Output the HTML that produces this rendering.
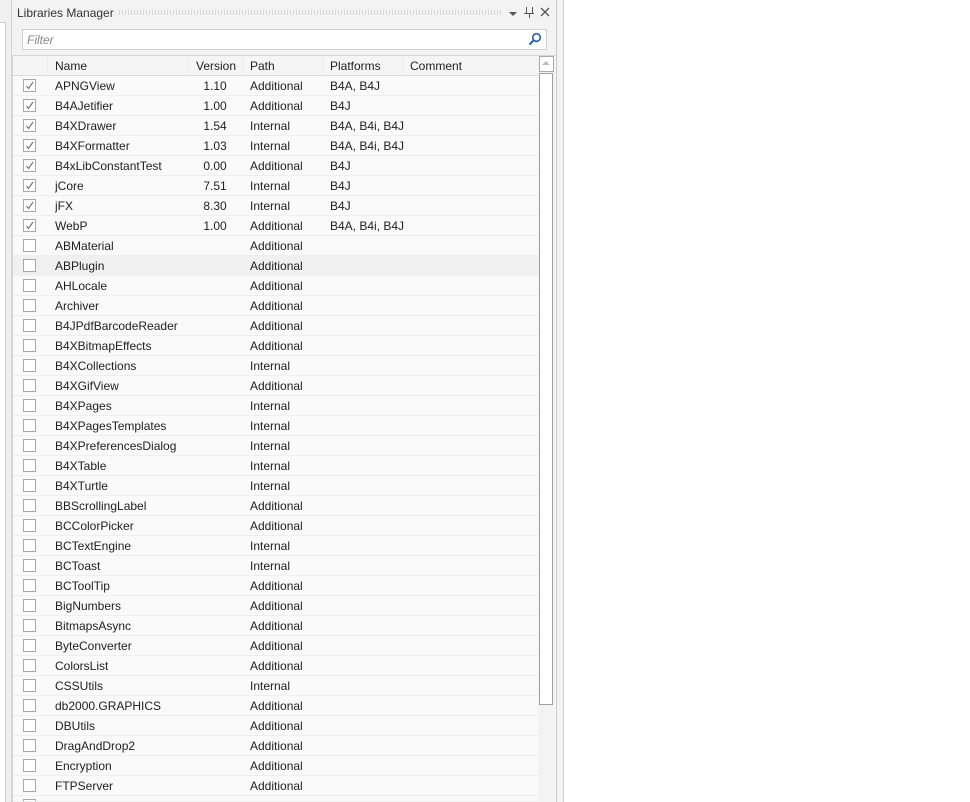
<!DOCTYPE html><html style="overflow:hidden;height:802px"><head><style>
body{margin:0;width:970px;height:802px;background:#fff;position:relative;overflow:hidden;font-family:"Liberation Sans",sans-serif;font-size:12px;color:#1e1e1e}
.a{position:absolute}
.row{position:absolute;left:13px;width:525px;height:20px;border-bottom:1px solid #efefef;box-sizing:border-box;background:#fafafa}
.row span{position:absolute;top:3px;white-space:nowrap;overflow:hidden}
.cb{position:absolute;left:10px;top:3px;width:11px;height:11px;border:1px solid #a8a8a8;background:#fff}
.cb svg{position:absolute;left:1px;top:1px}
.vl{position:absolute;top:56px;width:1px;height:746px;background:#ececec}
</style></head><body>
<div class="a" style="left:0;top:0;width:11px;height:802px;background:#f0f0f0"></div>
<div class="a" style="left:0;top:22px;width:5px;height:780px;border-right:1px solid #ccc;border-top:1px solid #ccc;background:#fff"></div>
<div class="a" style="left:11px;top:0;width:544px;height:802px;background:#f3f3f3;border-left:1px solid #d4d4d4;border-right:1px solid #c8c8c8"></div>
<div class="a" style="left:563px;top:0;width:1px;height:802px;background:#d0d0d0"></div>
<div class="a" style="left:557px;top:0;width:6px;height:802px;background:#f3f3f3"></div>
<div class="a" style="left:17px;top:6px;font-size:12px;color:#333">Libraries Manager</div>
<div class="a" style="left:118px;top:10px;width:384px;height:5px;background-image:radial-gradient(#bbb 0.6px,transparent 0.8px);background-size:3px 2px"></div>
<div class="a" style="left:509px;top:12px;width:0;height:0;border-left:4px solid transparent;border-right:4px solid transparent;border-top:4px solid #555"></div>
<div class="a" style="left:526px;top:7px;width:5px;height:6px;border:1px solid #555;border-top:none;background:#f3f3f3"></div>
<div class="a" style="left:524px;top:13px;width:10px;height:1px;background:#555"></div>
<div class="a" style="left:529px;top:13px;width:1px;height:5px;background:#555"></div>
<svg class="a" style="left:540px;top:7px" width="10" height="10"><path d="M1 1L9 9M9 1L1 9" stroke="#555" stroke-width="1.3"/></svg>
<div class="a" style="left:22px;top:29px;width:523px;height:19px;background:#fff;border:1px solid #cfcfcf"></div>
<div class="a" style="left:27px;top:33px;font-style:italic;color:#888">Filter</div>
<svg class="a" style="left:528px;top:32px" width="14" height="14"><circle cx="8.5" cy="5.5" r="3.8" fill="none" stroke="#1e5fb4" stroke-width="1.6"/><path d="M5.7 8.3L1.5 12.5" stroke="#1e5fb4" stroke-width="2"/></svg>
<div class="a" style="left:12px;top:55px;width:543px;height:747px;background:#fafafa;border-top:1px solid #d6d6d6;border-left:1px solid #d6d6d6"></div>
<div class="a" style="left:13px;top:56px;width:525px;height:19px;background:#f5f5f5;border-bottom:1px solid #dcdcdc"></div>
<div class="vl" style="left:47px"></div><div class="vl" style="left:187px"></div><div class="vl" style="left:242px"></div><div class="vl" style="left:322px"></div><div class="vl" style="left:402px"></div>
<div class="a" style="left:55px;top:59px">Name</div>
<div class="a" style="left:196px;top:59px">Version</div>
<div class="a" style="left:250px;top:59px">Path</div>
<div class="a" style="left:330px;top:59px">Platforms</div>
<div class="a" style="left:410px;top:59px">Comment</div>
<div id="rows"></div>
<div class="a" style="left:538px;top:56px;width:17px;height:746px;background:#f3f3f3"></div>
<div class="a" style="left:539px;top:56px;width:13px;height:14px;border:1px solid #aaa;background:#fff"></div>
<div class="a" style="left:542px;top:61px;border-left:4px solid transparent;border-right:4px solid transparent;border-bottom:4px solid #bbb"></div>
<div class="a" style="left:539px;top:73px;width:12px;height:630px;border:1px solid #a0a0a0;background:#fff"></div>
<script>
var d=[["APNGView","1.10","Additional","B4A, B4J",1],["B4AJetifier","1.00","Additional","B4J",1],["B4XDrawer","1.54","Internal","B4A, B4i, B4J",1],["B4XFormatter","1.03","Internal","B4A, B4i, B4J",1],["B4xLibConstantTest","0.00","Additional","B4J",1],["jCore","7.51","Internal","B4J",1],["jFX","8.30","Internal","B4J",1],["WebP","1.00","Additional","B4A, B4i, B4J",1],["ABMaterial","","Additional","",0],["ABPlugin","","Additional","",0],["AHLocale","","Additional","",0],["Archiver","","Additional","",0],["B4JPdfBarcodeReader","","Additional","",0],["B4XBitmapEffects","","Additional","",0],["B4XCollections","","Internal","",0],["B4XGifView","","Additional","",0],["B4XPages","","Internal","",0],["B4XPagesTemplates","","Internal","",0],["B4XPreferencesDialog","","Internal","",0],["B4XTable","","Internal","",0],["B4XTurtle","","Internal","",0],["BBScrollingLabel","","Additional","",0],["BCColorPicker","","Additional","",0],["BCTextEngine","","Internal","",0],["BCToast","","Internal","",0],["BCToolTip","","Additional","",0],["BigNumbers","","Additional","",0],["BitmapsAsync","","Additional","",0],["ByteConverter","","Additional","",0],["ColorsList","","Additional","",0],["CSSUtils","","Internal","",0],["db2000.GRAPHICS","","Additional","",0],["DBUtils","","Additional","",0],["DragAndDrop2","","Additional","",0],["Encryption","","Additional","",0],["FTPServer","","Additional","",0],["Icelib","","Additional","",0]];
var h="";d.forEach(function(r,i){var y=76+i*20;var bg=i==9?"#f0f0f0":"#fafafa";var ht=i==36?6:20;
h+='<div class="row" style="top:'+y+'px;height:'+ht+'px;overflow:hidden;background:'+bg+'"><div class="cb">'+(r[4]?'<svg width="9" height="9"><path d="M1.5 5L3.5 7.5L8 1" fill="none" stroke="#777" stroke-width="1.2"/></svg>':'')+'</div><span style="left:42px;width:128px">'+r[0]+'</span><span style="text-align:center;left:176px;width:52px">'+r[1]+'</span><span style="left:237px">'+r[2]+'</span><span style="left:317px;width:82px">'+r[3]+'</span></div>';});
document.getElementById("rows").innerHTML=h;
</script>
</body></html>
